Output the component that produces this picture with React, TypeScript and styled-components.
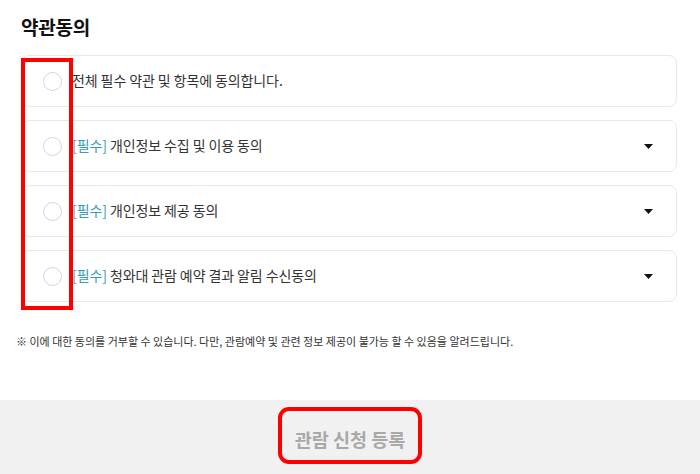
import React from "react";
import styled, { createGlobalStyle } from "styled-components";

const Global = createGlobalStyle`
  html, body { margin: 0; padding: 0; background: #fff; }
  body { font-family: "Noto Sans CJK KR", "Noto Sans", sans-serif; color: #333; }
`;

const Page = styled.div`
  position: relative;
  width: 700px;
  height: 474px;
  display: flex;
  flex-direction: column;
  overflow: hidden;
`;

const Content = styled.div`
  flex: 1;
  padding: 14px 23px 0 21px;
  display: flex;
  flex-direction: column;
`;

const Title = styled.h2`
  margin: 0;
  font-size: 19px;
  font-weight: 700;
  color: #111;
  line-height: 26px;
  letter-spacing: -0.2px;
`;

const List = styled.div`
  margin-top: 15px;
  display: flex;
  flex-direction: column;
  gap: 13px;
`;

const Card = styled.div`
  height: 52px;
  box-sizing: border-box;
  border: 1px solid #e9e9e9;
  border-radius: 8px;
  display: flex;
  align-items: center;
  padding: 0 23px 0 21px;
`;

const Radio = styled.span`
  width: 19px;
  height: 19px;
  box-sizing: border-box;
  border: 1px solid #d6d6d6;
  border-radius: 50%;
  flex: none;
`;

const Label = styled.span`
  margin-left: 10px;
  padding-bottom: 2px;
  font-size: 14px;
  line-height: 20px;
  color: #333;
  letter-spacing: -0.1px;
  flex: 1;
`;

const Tag = styled.span`
  color: #3b9ab6;
`;

const Caret = styled.svg`
  width: 9px;
  height: 5px;
  flex: none;
`;

const Note = styled.p`
  margin: 32px 0 0 -5px;
  font-size: 11px;
  color: #333;
  letter-spacing: 0;
  line-height: 14px;
`;

const Footer = styled.div`
  height: 74px;
  background: #f1f1f1;
  display: flex;
  align-items: center;
  justify-content: center;
`;

const Submit = styled.button`
  border: none;
  background: transparent;
  font-family: inherit;
  font-size: 18.5px;
  font-weight: 700;
  color: #a8a8a8;
  letter-spacing: 0;
  padding: 0;
  margin-top: 3px;
`;

const Mark = styled.div<{ $x: number; $y: number; $w: number; $h: number; $r: number }>`
  position: absolute;
  left: ${(p) => p.$x}px;
  top: ${(p) => p.$y}px;
  width: ${(p) => p.$w}px;
  height: ${(p) => p.$h}px;
  box-sizing: border-box;
  border: 4px solid #f00;
  border-radius: ${(p) => p.$r}px;
  pointer-events: none;
`;

const items = [
  { tag: false, text: "전체 필수 약관 및 항목에 동의합니다.", caret: false },
  { tag: true, text: "개인정보 수집 및 이용 동의", caret: true },
  { tag: true, text: "개인정보 제공 동의", caret: true },
  { tag: true, text: "청와대 관람 예약 결과 알림 수신동의", caret: true },
];

export default function App() {
  return (
    <Page>
      <Global />
      <Content>
        <Title>약관동의</Title>
        <List>
          {items.map((it, i) => (
            <Card key={i}>
              <Radio />
              <Label>
                {it.tag && <Tag>[필수]</Tag>}
                {it.tag ? " " : ""}
                {it.text}
              </Label>
              {it.caret && (
                <Caret viewBox="0 0 9 5">
                  <path d="M0 0 H9 L4.5 5 Z" fill="#111" />
                </Caret>
              )}
            </Card>
          ))}
        </List>
        <Note>※ 이에 대한 동의를 거부할 수 있습니다. 다만, 관람예약 및 관련 정보 제공이 불가능 할 수 있음을 알려드립니다.</Note>
      </Content>
      <Footer>
        <Submit>관람 신청 등록</Submit>
      </Footer>
      <Mark $x={21} $y={58} $w={52} $h={252} $r={0} />
      <Mark $x={278} $y={407} $w={144} $h={57} $r={11} />
    </Page>
  );
}
